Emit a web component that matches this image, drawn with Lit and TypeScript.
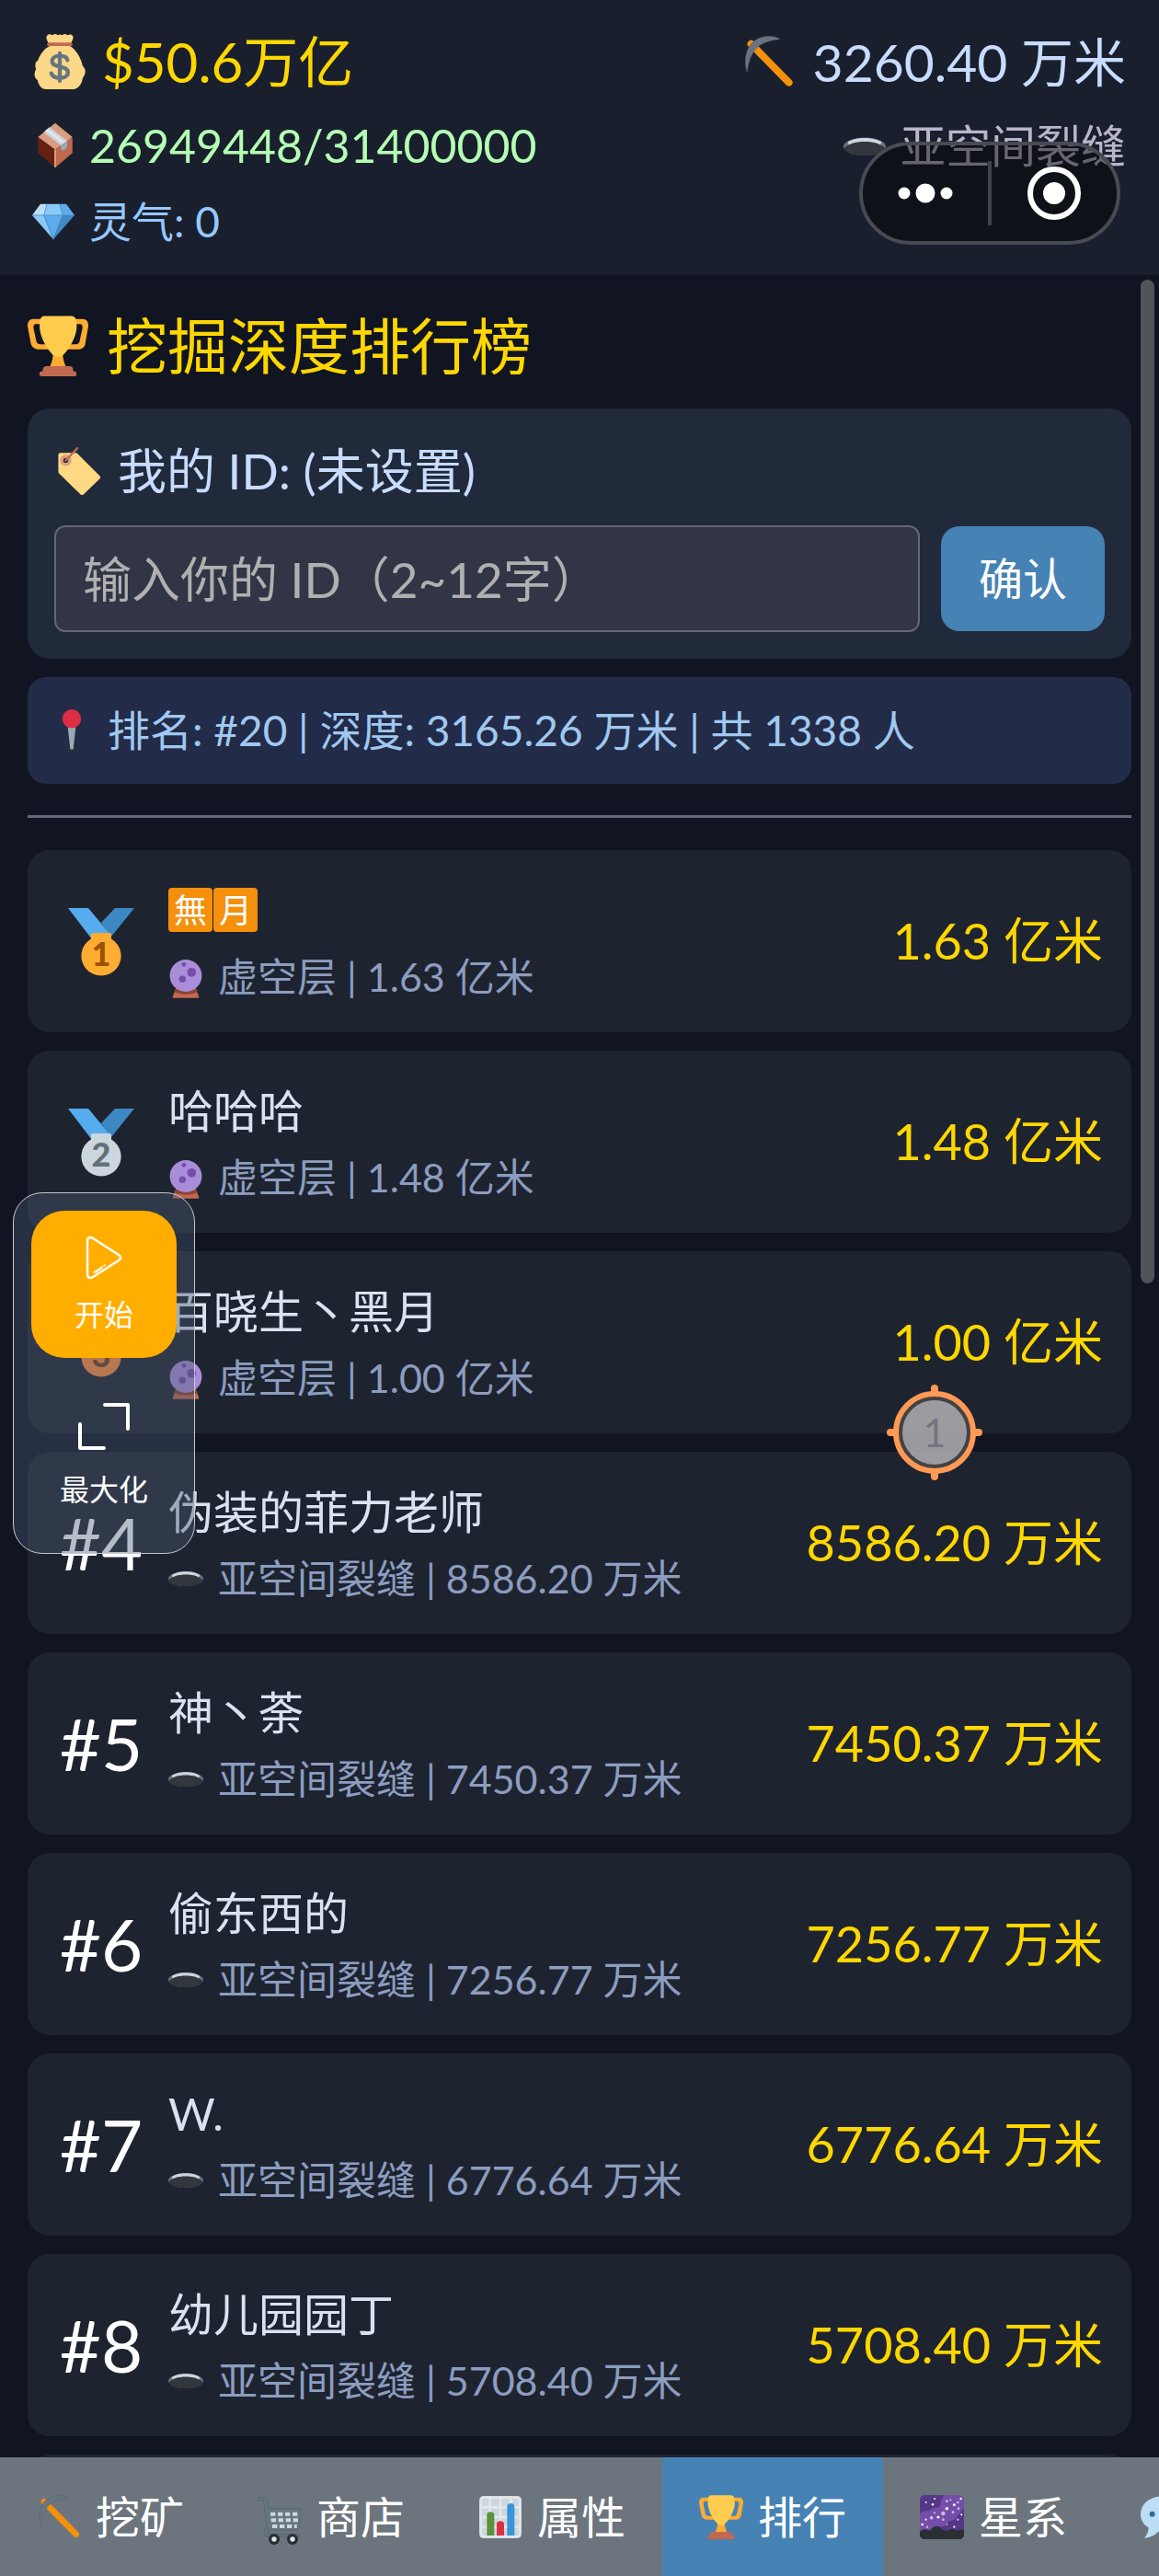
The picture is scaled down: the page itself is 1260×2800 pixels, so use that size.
/**
 * <app-root> — Mining game, depth leaderboard screen.
 *
 * Resource header on top, ranking list in the middle, tab bar at the
 * bottom. The auto-clicker panel, tap marker and mini-program capsule
 * float above the page.
 */

import { LitElement, html, svg, css, nothing } from "lit";
import type { TemplateResult } from "lit";
import { customElement, property, state } from "lit/decorators.js";
import { classMap } from "lit/directives/class-map.js";

interface Miner {
  name: string;
  icon: string;
  layer: string;
  depth: string;
  /** Draw every character of the name as an orange tile. */
  tiles?: boolean;
}

interface Tab {
  id: string;
  icon: string;
  label: string;
}

const MINERS: Miner[] = [
  { name: "無月", icon: "orb", layer: "虚空层", depth: "1.63 亿米", tiles: true },
  { name: "哈哈哈", icon: "orb", layer: "虚空层", depth: "1.48 亿米" },
  { name: "百晓生丶黑月", icon: "orb", layer: "虚空层", depth: "1.00 亿米" },
  { name: "伪装的菲力老师", icon: "hole", layer: "亚空间裂缝", depth: "8586.20 万米" },
  { name: "神丶荼", icon: "hole", layer: "亚空间裂缝", depth: "7450.37 万米" },
  { name: "偷东西的", icon: "hole", layer: "亚空间裂缝", depth: "7256.77 万米" },
  { name: "W.", icon: "hole", layer: "亚空间裂缝", depth: "6776.64 万米" },
  { name: "幼儿园园丁", icon: "hole", layer: "亚空间裂缝", depth: "5708.40 万米" },
];

const TABS: Tab[] = [
  { id: "mine", icon: "pickaxe", label: "挖矿" },
  { id: "shop", icon: "cart", label: "商店" },
  { id: "stats", icon: "chart", label: "属性" },
  { id: "rank", icon: "trophy", label: "排行" },
  { id: "galaxy", icon: "galaxy", label: "星系" },
  { id: "chat", icon: "chat", label: "" },
];

const medal = (n: number, disc: string, ink: string) => svg`
  <path fill="#3b88c3" d="M25.500 0H36L23.500 15.500 18 8z"/>
  <path fill="#55acee" d="M0 0h11l12.500 15v2H13z"/>
  <path fill=${disc} d="M13.500 13.500h9c.8 0 1 .4 1 1v2.200a10.800 10.800 0 1 1-11 0v-2.200c0-.6.3-1 1-1z"/>
  <text x="18" y="31.500" text-anchor="middle" font-family="Lato" font-weight="900" font-size="18" fill=${ink}>${n}</text>
`;

const ICONS: Record<string, TemplateResult> = {
  money: svg`
    <path fill="#fdd888" d="M12 7.500C10 5 8.500 2.500 9.700 1c1-1.300 2.400-.7 3.500-.2 1.300-1 2.200-1 3.400 0 1-.6 1.900-.6 2.900 0 1.300-1 2.300-1 3.400 0 1.300-.5 2.600-1 3.500.3 1 1.500-.4 4-2.400 6.400 4.500 2 8 8.500 9 13.500 2.500 2 1.800 5.500 0 7.500C32.500 33 29.500 36 27 36H9c-3 0-5-3-5.500-6C1.500 29 .8 26 2.500 23 2 21 1.500 18 3.800 17.200 5 13 8.500 9 12 7.500z"/>
    <path fill="#bf6952" d="M10.500 5.500h15c1 0 1 2.300 0 2.300h-15c-1 0-1-2.300 0-2.300z"/>
    <path fill="none" stroke="#67757f" stroke-width="2.600" stroke-linecap="round" d="M18 12.500v18M23 17c-.4-1.900-2.200-2.800-5-2.800s-5 1.300-5 3.500c0 5 10.300 2.200 10.300 7.300 0 2.400-2.300 3.600-5.300 3.600s-5-1.100-5.500-3"/>`,
  crate: svg`
    <path fill="#d99e82" d="M18 .5 31.500 11.500 18 21.500 4.500 11.500z"/>
    <path fill="#662113" d="M4.500 11.500 18 21.500v14L4.500 24z"/>
    <path fill="#c1694f" d="M31.500 11.500 18 21.500v14L31.500 24z"/>
    <path fill="#d99e82" d="m17.300 21.500.7-.5.7.5v13.400l-.7.6-.7-.6z"/>
    <path fill="#ccd6dd" d="m9 7.500 4.500-3.700L27.500 14.500 22.500 18z"/>
    <path fill="#e1e8ed" d="m10.500 6.300 1.600-1.300L25.500 15.500 24 16.800z"/>
    <path fill="#99aab5" d="m22.500 18 5-3.500V19l-2.500 3-2.500-.5z"/>`,
  gem: svg`
    <path fill="#bdddf4" d="M7 3h6l-2.500 9.500H0z"/>
    <path fill="#8ccaf7" d="M12.500 3h11l2.500 9.500H10z"/>
    <path fill="#5dadec" d="M23.500 3H29l7 9.500H26z"/>
    <path fill="#8ccaf7" d="M0 12.500h10L18 33z"/>
    <path fill="#5dadec" d="M10 12.500h16L18 33z"/>
    <path fill="#4289c1" d="M26 12.500h10L18 33z"/>
    <path fill="none" stroke="#4289c1" stroke-width=".6" d="M0 12.500h36M12.500 3 10 12.500 18 33l8-20.500L23.500 3"/>`,
  pickaxe: svg`
    <path stroke="#f4900c" stroke-width="5" stroke-linecap="round" d="M6 5.500 32 32"/>
    <path fill="#66757f" stroke="#505c65" stroke-width=".3" d="M3.300 25C-.5 13 5 .3 18 .3c3.500 0 7.500 1 7.500 2.200C15 3 9.500 7.500 7.800 11 5 15 4 20 3.300 25z"/>`,
  hole: svg`
    <ellipse cx="18" cy="19" rx="18" ry="7.600" fill="#66757f"/>
    <path fill="#ccd6dd" d="M3.500 15.300c3-2.200 8.500-3.600 14.500-3.600s11.500 1.400 14.500 3.600L31 18H5z"/>
    <path fill="#31373d" d="M.3 20.500C4 16.800 10 14.800 18 14.800s14 2 17.700 5.700C34 24.200 27 26.600 18 26.600S2 24.200.3 20.500z"/>`,
  trophy: svg`
    <path fill="#ffac33" d="M5.123 5h6C12.227 5 13 4.896 13 6V4c0-1.104-.773-2-1.877-2h-8c-2 0-3.583 2.125-3 5 0 0 1.791 9.375 1.917 9.958C2.373 18.500 4.164 20 6.081 20h6.958c1.105 0-.039-1.896-.039-3v-2c0 1.104-.773 2-1.877 2h-4c-1.104 0-1.833-1.042-2-2S3.539 7.667 3.539 7.667C3.206 5.750 4.018 5 5.123 5zm25.812 0h-6C23.831 5 22 4.896 22 6V4c0-1.104 1.831-2 2.935-2h8c2 0 3.584 2.125 3 5 0 0-1.633 9.419-1.771 10-.354 1.500-2.042 3-4 3h-7.146C21.914 20 22 18.104 22 17v-2c0 1.104 1.831 2 2.935 2h4c1.104 0 1.834-1.042 2-2s1.584-7.333 1.584-7.333C32.851 5.750 32.040 5 30.935 5zM20.832 22c0-6.958-2.709 0-2.709 0s-3-6.958-3 0-3.291 10-3.291 10h12.292c-.001 0-3.292-3.042-3.292-10z"/>
    <path fill="#ffcc4d" d="M29.123 6.577c0 6.775-6.770 18.192-11 18.192-4.231 0-11-11.417-11-18.192 0-5.195 1-6.319 3-6.319 1.374 0 6.025-.027 8-.027l7-.001c2.917-.001 4 .684 4 6.347z"/>
    <path fill="#c1694f" d="M27 33c0 1.104.227 2-.877 2h-16C9.018 35 9 34.104 9 33v-1c0-1.104 1.164-2 2.206-2h13.917c1.042 0 1.877.896 1.877 2v1z"/>
    <path fill="#c1694f" d="M29 34.625c0 .76.165 1.375-1.252 1.375H8.498C7.206 36 7 35.385 7 34.625v-.25C7 33.615 7.738 33 8.498 33h19.250c.759 0 1.252.615 1.252 1.375v.25z"/>`,
  tag: svg`
    <path fill="#ffd983" stroke="#ffd983" stroke-width="3" stroke-linejoin="round" d="M4.500 6.500h11.500L32.500 23 20.500 34.500 4.500 19z"/>
    <circle cx="8.500" cy="10.500" r="4.200" fill="#d99e82"/>
    <circle cx="8.500" cy="10.500" r="1.800" fill="#292f33"/>
    <path stroke="#c1694f" stroke-width="1.600" stroke-linecap="round" d="m8.500 10.500 8.500-9"/>`,
  pin: svg`
    <ellipse cx="18" cy="34" rx="5" ry="2" fill="#292f33"/>
    <path fill="#99aab5" d="M14.500 14h7l-2.200 20h-2.600z"/>
    <circle cx="18" cy="8" r="8" fill="#dd2e44"/>`,
  orb: svg`
    <path fill="#c1694f" d="M8 30h20l3.500 9c.3 1-.2 1.500-1 1.500h-25c-.8 0-1.300-.5-1-1.500z"/>
    <path fill="#8a4633" d="M7 31.500h22l1 2.600c-6 3.500-18 3.500-24 0z"/>
    <circle cx="18" cy="17.500" r="16.500" fill="#aa8dd8"/>
    <circle cx="16" cy="6" r="2.300" fill="#744eaa"/>
    <circle cx="24" cy="14" r="4.600" fill="#744eaa"/>
    <circle cx="14.500" cy="21" r="3.500" fill="#744eaa"/>`,
  gold: medal(1, "#ffac33", "#9e5200"),
  silver: medal(2, "#ccd6dd", "#627077"),
  bronze: medal(3, "#ff8a3b", "#7c4119"),
  cart: svg`
    <path fill="#66757f" stroke="#4d5962" stroke-width=".4" d="M1 2.200h4.500c1.300 0 2.200.8 2.500 2L9.500 11H34c1 0 1.600.6 1.500 1.500l-1.600 14c-.2 1.300-1 2-2.300 2H10c-2 0-2.500 3.500 0 3.500h23.500c1.500 0 1.500 2.200 0 2.200H9.500c-5 0-5.500-6-2-7.700L5 5.500c-.1-.6-.5-.8-1-.8H1c-1.600 0-1.600-2.500 0-2.500z"/>
    <path stroke="#ccd6dd" stroke-width="3" stroke-dasharray="4 2" d="M10.500 15.500h23M11 20.500h22M12 25.500h20"/>
    <circle cx="13.500" cy="36" r="4.500" fill="#292f33"/><circle cx="13.500" cy="36" r="2" fill="#e1e8ed"/>
    <circle cx="28.500" cy="36" r="4.500" fill="#292f33"/><circle cx="28.500" cy="36" r="2" fill="#e1e8ed"/>`,
  chart: svg`
    <rect x="1" y="1" width="34" height="34" rx="3" fill="#ccd6dd"/>
    <path stroke="#e1e8ed" stroke-width="2" d="M1 10h34M1 18h34M1 26h34M9.500 1v34M18 1v34M26.500 1v34"/>
    <rect x="2" y="2" width="32" height="32" rx="2.500" fill="none" stroke="#e1e8ed" stroke-width="2"/>
    <path fill="#5c913b" d="M7 33V16c0-3 6-3 6 0v17z"/>
    <path fill="#dd2e44" d="M15 33v-9.500c0-3 6-3 6 0V33z"/>
    <path fill="#3b94d9" d="M23.500 33V9c0-3 6-3 6 0v24z"/>`,
  galaxy: svg`
    <rect width="36" height="36" rx="4" fill="#553788"/>
    <path fill="#744eaa" d="M21 0h11c2.200 0 4 1.800 4 4v7c-2.500 1-2 4-5 5-2 6-6 4-9 7-3 5-8 1-11 4-4 4-8 2-11 3V15c3-1 5-3 8-2 2-4 7-1 9-5 0-3 1-6 3-8z"/>
    <path fill="#292f33" d="M0 30c3-3 5-2 8-1 2-2 5-5 8-3 3 3 6 4 9 2 2-1 4 1 6 1 2-2 4-1 5 0v3c0 2.200-1.800 4-4 4H4c-2.200 0-4-1.800-4-4z"/>
    <g fill="#fff"><circle cx="12" cy="3" r=".7"/><circle cx="5" cy="6" r=".7"/><circle cx="10.500" cy="7.700" r="1"/><circle cx="28" cy="8" r="1.100"/><circle cx="22" cy="11" r="1.300"/><circle cx="15" cy="18" r="1.200"/><circle cx="33.500" cy="3" r=".9"/><circle cx="34" cy="16" r=".8"/><circle cx="2" cy="24" r="1"/><circle cx="28" cy="26" r=".8"/><circle cx="5" cy="20" r=".8"/><circle cx="22" cy="24" r=".6"/></g>
    <g fill="#cbb7ea"><circle cx="19" cy="15" r="1.700"/><circle cx="9.500" cy="18.500" r="1.400"/><circle cx="22" cy="5" r="1"/><circle cx="25" cy="4" r=".8"/><circle cx="31" cy="6" r="1"/><circle cx="27" cy="14" r="1"/><circle cx="31.500" cy="11" r="1"/><circle cx="12" cy="14.500" r=".8"/><circle cx="19" cy="20" r="1"/><circle cx="31" cy="20" r=".9"/><circle cx="6" cy="26" r=".9"/></g>`,
  chat: svg`
    <path fill="#bdddf4" d="M18 1C8 1 0 7 0 15.500c0 5 2.500 8.500 6.500 11C6.500 30 5 33 3 35c5 0 9-2.500 11.500-5.300 1 .2 2.300.3 3.500.3 10 0 18-6 18-14.500S28 1 18 1z"/>
    <g fill="#2a6797"><circle cx="9.500" cy="15.500" r="2.200"/><circle cx="18" cy="15.500" r="2.200"/><circle cx="26.500" cy="15.500" r="2.200"/></g>`,
};

const MEDALS = ["gold", "silver", "bronze"];

/** Square pictogram; its size follows the --size custom property. */
@customElement("game-icon")
export class GameIcon extends LitElement {
  @property() name = "";

  static styles = css`
    :host {
      display: block;
      flex: none;
      width: var(--size, 48px);
      height: var(--size, 48px);
    }

    svg {
      display: block;
      width: 100%;
      height: 100%;
      overflow: visible;
    }
  `;

  render() {
    return html`<svg viewBox="0 0 36 36" aria-hidden="true" fill="none">${ICONS[this.name] ?? nothing}</svg>`;
  }
}

@customElement("app-root")
export class AppRoot extends LitElement {
  @state() private tab = "rank";
  @state() private playerId = "";

  static styles = css`
    :host {
      position: relative;
      display: flex;
      flex-direction: column;
      height: 100vh;
      overflow: hidden;
      background: #111522;
      color: #ffffff;
      font-family: Lato, "Noto Sans CJK SC", sans-serif;
      line-height: 1;
    }

    * {
      box-sizing: border-box;
    }

    button,
    input {
      font-family: inherit;
      line-height: inherit;
    }

    button {
      border: 0;
      padding: 0;
      color: #ffffff;
      cursor: pointer;
    }

    .line {
      display: flex;
      align-items: center;
      gap: 16px;
      white-space: nowrap;
    }

    /* resource header */
    .status {
      display: flex;
      justify-content: space-between;
      flex: none;
      padding: 19px 36px 18px 35px;
      background: #191f2c;
    }

    .side {
      display: flex;
      flex-direction: column;
    }

    .side.right {
      align-items: flex-end;
    }

    .cash,
    .depth {
      height: 96px;
      font-size: 60px;
      color: #ffd700;
      --size: 60px;
    }

    .depth {
      gap: 20px;
      font-size: 57px;
      color: #c8dcff;
      --size: 57px;
    }

    .cargo,
    .layer {
      height: 86px;
      gap: 12px;
      font-size: 50px;
      color: #b4ffb4;
      --size: 50px;
    }

    .layer {
      gap: 16px;
      font-size: 49px;
      color: #bab4cc;
      --size: 46px;
    }

    .aura {
      height: 80px;
      font-size: 46px;
      color: #96c8ff;
      --size: 46px;
    }

    /* leaderboard */
    main {
      position: relative;
      flex: 1;
      min-height: 0;
      overflow: hidden;
      padding: 30px 30px 0;
    }

    .title {
      gap: 20px;
      height: 94px;
      margin: 0 0 21px;
      font-size: 66px;
      font-weight: 400;
      color: #ffd700;
      --size: 66px;
    }

    .identity {
      display: flex;
      flex-direction: column;
      gap: 22px;
      padding: 29px;
      border-radius: 24px;
      background: #212a3b;
    }

    .identity label {
      height: 76px;
      font-size: 53px;
      color: #c8dcff;
      --size: 53px;
    }

    .entry {
      display: flex;
      align-items: center;
      gap: 23px;
    }

    .entry input {
      flex: 1;
      min-width: 0;
      height: 116px;
      padding: 0 29px;
      border: 2px solid #64667a;
      border-radius: 12px;
      background: #313545;
      color: #ffffff;
      font-size: 53px;
      outline: none;
    }

    .entry input::placeholder {
      color: #b0b0b0;
      opacity: 1;
    }

    .confirm {
      height: 114px;
      padding: 0 41px;
      border-radius: 20px;
      background: #4682b4;
      font-size: 48px;
    }

    .mine {
      height: 116px;
      margin: 20px 0 0;
      padding: 0 25px;
      border-radius: 20px;
      background: #222b47;
      font-size: 46px;
      color: #a0c8f0;
      --size: 46px;
    }

    hr {
      height: 3px;
      margin: 34px 0 35px;
      border: 0;
      background: #64667a;
    }

    .ranking {
      display: flex;
      flex-direction: column;
      gap: 20px;
      margin: 0;
      padding: 0;
      list-style: none;
    }

    .row {
      display: flex;
      align-items: center;
      min-height: 198px;
      padding: 0 31px;
      border-radius: 24px;
      background: #1e2330;
      --size: 72px;
    }

    .place {
      display: flex;
      justify-content: center;
      width: 98px;
      margin-right: 24px;
      font-size: 78px;
    }

    .who {
      flex: 1;
    }

    .name {
      display: flex;
      align-items: center;
      height: 76px;
      font-size: 49px;
      color: #dce1f0;
    }

    .tiles {
      gap: 1px;
    }

    .tile {
      width: 48px;
      height: 48px;
      border-radius: 4px;
      background: #f4900c;
      color: #ffffff;
      font-size: 36px;
      line-height: 48px;
      text-align: center;
    }

    .sub {
      height: 68px;
      font-size: 43px;
      color: #8c9dbf;
      --size: 38px;
    }

    .score {
      font-size: 54px;
      color: #ffd700;
      white-space: nowrap;
    }

    .thumb {
      position: absolute;
      top: 5px;
      right: 5px;
      width: 15px;
      height: 46%;
      border-radius: 8px;
      background: #535458;
    }

    /* tab bar */
    nav {
      display: flex;
      flex: none;
      height: 129px;
      overflow: hidden;
      background: #6c757d;
    }

    .tab {
      display: flex;
      flex: none;
      align-items: center;
      gap: 16px;
      padding: 0 40px;
      background: none;
      font-size: 48px;
      --size: 48px;
    }

    .tab.active {
      background: #4682b4;
    }

    /* overlays */
    .capsule {
      position: absolute;
      top: 154px;
      right: 42px;
      display: flex;
      align-items: center;
      width: 284px;
      height: 112px;
      border: 4px solid #484b54;
      border-radius: 56px;
      background: rgba(0, 0, 0, 0.44);
    }

    .capsule button {
      flex: 1;
      display: flex;
      justify-content: center;
      background: none;
    }

    .capsule .more {
      border-right: 4px solid #40434b;
      height: 70px;
      align-items: center;
    }

    .clicker {
      position: absolute;
      top: 1296px;
      left: 14px;
      display: flex;
      flex-direction: column;
      width: 198px;
      height: 393px;
      padding: 19px;
      border: 1px solid #c4c8d0;
      border-radius: 32px;
      background: rgba(72, 90, 115, 0.4);
    }

    .clicker button {
      display: flex;
      flex-direction: column;
      align-items: center;
      height: 160px;
      background: none;
      font-size: 32px;
    }

    .clicker .start {
      gap: 22px;
      padding-top: 27px;
      border-radius: 36px;
      background: #ffae00;
    }

    .clicker .maximize {
      gap: 27px;
      margin-top: 32px;
      padding-top: 16px;
    }

    .marker {
      position: absolute;
      top: 1505px;
      left: 964px;
    }

    .glyph {
      display: block;
      flex: none;
    }
  `;

  private _rename(e: Event): void {
    e.preventDefault();
    const form = e.target as HTMLFormElement;
    this.playerId = String(new FormData(form).get("player") ?? "").trim();
  }

  private _renderRow(m: Miner, i: number) {
    return html`
      <li class="row">
        <div class="place">
          ${MEDALS[i] ? html`<game-icon name=${MEDALS[i]}></game-icon>` : `#${i + 1}`}
        </div>
        <div class="who">
          ${m.tiles
            ? html`<div class="name tiles">${[...m.name].map((c) => html`<span class="tile">${c}</span>`)}</div>`
            : html`<div class="name">${m.name}</div>`}
          <div class="line sub">
            <game-icon name=${m.icon}></game-icon>
            <span>${m.layer} | ${m.depth}</span>
          </div>
        </div>
        <div class="score">${m.depth}</div>
      </li>
    `;
  }

  private _renderOverlays() {
    return html`
      <div class="capsule">
        <button class="more" aria-label="更多">
          <svg class="glyph" width="60" height="24" viewBox="0 0 60 24" fill="#fff">
            <circle cx="7" cy="12" r="6.500" /><circle cx="30" cy="12" r="10.500" /><circle cx="53" cy="12" r="6.500" />
          </svg>
        </button>
        <button aria-label="关闭">
          <svg class="glyph" width="58" height="58" viewBox="0 0 58 58">
            <circle cx="29" cy="29" r="26" fill="none" stroke="#fff" stroke-width="6" />
            <circle cx="29" cy="29" r="12" fill="#fff" />
          </svg>
        </button>
      </div>

      <div class="clicker">
        <button class="start">
          <svg class="glyph" width="40" height="48" viewBox="0 0 40 48" fill="none" stroke="#fff" stroke-linecap="round">
            <path stroke-width="2.500" stroke-linejoin="round" d="M2 6c0-4 3-5 6-3l28 18c3 2 3 4 0 6L8 45c-3 2-6 1-6-3z" />
            <path stroke-width="1.500" d="m9 40 9-6m-7 6 7-5m2-2 1-1" />
          </svg>
          开始
        </button>
        <button class="maximize">
          <svg class="glyph" width="56" height="52" viewBox="0 0 56 52" fill="none" stroke="#fff" stroke-width="4" stroke-linecap="round" stroke-linejoin="round">
            <path d="M29 3h25v26M2 24v26h26" />
          </svg>
          最大化
        </button>
      </div>

      <svg class="marker" width="104" height="104" viewBox="0 0 104 104">
        <path stroke="#ff9955" stroke-width="8" stroke-linecap="round" d="M52 4v6m0 84v6M4 52h6m84 0h6" />
        <circle cx="52" cy="52" r="37" fill="#a9a9ad" fill-opacity=".9" stroke="#424242" stroke-width="4" />
        <circle cx="52" cy="52" r="42" fill="none" stroke="#ff9955" stroke-width="6" />
        <text x="52" y="68" text-anchor="middle" font-size="42" fill="#74757f">1</text>
      </svg>
    `;
  }

  render() {
    return html`
      <header class="status">
        <div class="side">
          <div class="line cash"><game-icon name="money"></game-icon><span>$50.6万亿</span></div>
          <div class="line cargo"><game-icon name="crate"></game-icon><span>26949448/31400000</span></div>
          <div class="line aura"><game-icon name="gem"></game-icon><span>灵气: 0</span></div>
        </div>
        <div class="side right">
          <div class="line depth"><game-icon name="pickaxe"></game-icon><span>3260.40 万米</span></div>
          <div class="line layer"><game-icon name="hole"></game-icon><span>亚空间裂缝</span></div>
        </div>
      </header>

      <main>
        <h1 class="line title"><game-icon name="trophy"></game-icon>挖掘深度排行榜</h1>

        <form class="identity" @submit=${this._rename}>
          <label class="line" for="player">
            <game-icon name="tag"></game-icon>
            <span>我的 ID: (${this.playerId || "未设置"})</span>
          </label>
          <div class="entry">
            <input id="player" name="player" type="text" maxlength="12" placeholder="输入你的 ID（2~12字）" />
            <button class="confirm" type="submit">确认</button>
          </div>
        </form>

        <p class="line mine">
          <game-icon name="pin"></game-icon>
          <span>排名: #20 | 深度: 3165.26 万米 | 共 1338 人</span>
        </p>

        <hr />

        <ol class="ranking">
          ${MINERS.map((m, i) => this._renderRow(m, i))}
          <li class="row"></li>
        </ol>
        <div class="thumb"></div>
      </main>

      <nav>
        ${TABS.map(
          (t) => html`
            <button
              class=${classMap({ tab: true, active: t.id === this.tab })}
              aria-label=${t.label || t.id}
              @click=${() => (this.tab = t.id)}
            ><game-icon name=${t.icon}></game-icon>${t.label}</button>
          `,
        )}
      </nav>

      ${this._renderOverlays()}
    `;
  }
}

declare global {
  interface HTMLElementTagNameMap {
    "game-icon": GameIcon;
    "app-root": AppRoot;
  }
}
